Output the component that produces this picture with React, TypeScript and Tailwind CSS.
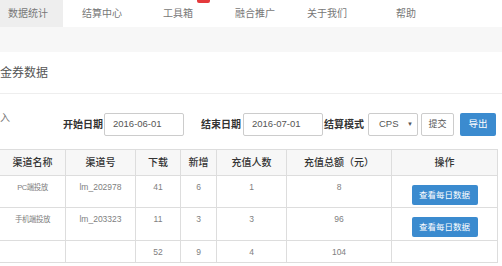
const FONT = '"Liberation Sans","Noto Sans CJK SC",sans-serif';

const navItems = [
  { label: "数据统计", cls: "w-[63px] pl-[8px] bg-[#eeeeee]" },
  { label: "结算中心", cls: "ml-[19px]" },
  { label: "工具箱", cls: "ml-[41px]", badge: true },
  { label: "融合推广", cls: "ml-[42px]" },
  { label: "关于我们", cls: "ml-[32px]" },
  { label: "帮助", cls: "ml-[49px]" },
];

const rows = [
  { name: "PC端投放", id: "lm_202978", down: 41, add: 6, payers: 1, total: 8, action: true, h: "h-[32px]" },
  { name: "手机端投放", id: "lm_203323", down: 11, add: 3, payers: 3, total: 96, action: true, h: "h-[33px]" },
  { name: "", id: "", down: 52, add: 9, payers: 4, total: 104, action: false, h: "h-[22px]" },
];

function Cell({ children }: { children?: React.ReactNode }) {
  return (
    <td className="border border-[#dddddd] pt-[5px] align-top text-center text-[8.5px] leading-[12px] text-[#808080]">
      {children}
    </td>
  );
}

export default function App() {
  return (
    <div className="w-[502px] h-[266px] overflow-hidden bg-white" style={{ fontFamily: FONT }}>
      {/* top nav */}
      <nav className="flex h-[27px] items-stretch text-[10px] text-[#777]">
        {navItems.map((item) => (
          <div key={item.label} className={`relative flex items-center ${item.cls}`}>
            {item.label}
            {item.badge && (
              <span className="absolute left-[34px] top-[-6px] h-[9px] w-[13px] rounded-[2px] bg-[#e4393c]" />
            )}
          </div>
        ))}
      </nav>

      {/* breadcrumb band */}
      <div className="h-[25px] bg-[#f7f7f7]" />

      <div className="flex h-[42px] items-center border-b border-[#eeeeee] text-[12px] text-[#555]">
        金券数据
      </div>

      {/* filters */}
      <div className="mt-[19px] flex h-[23px] items-center text-[#333]">
        <span className="self-start text-[10px] leading-[10px] text-[#777]">入</span>
        <span className="ml-[53px] text-[10px] font-bold">开始日期</span>
        <div className="ml-[1px] flex h-[23px] w-[80px] items-center rounded-[2px] border border-[#cccccc] pl-[8px] text-[9.5px] text-[#555]">
          2016-06-01
        </div>
        <span className="ml-[17px] text-[10px] font-bold">结束日期</span>
        <div className="ml-[2px] flex h-[23px] w-[80px] items-center rounded-[2px] border border-[#cccccc] pl-[8px] text-[9.5px] text-[#555]">
          2016-07-01
        </div>
        <span className="ml-[1px] text-[10px] font-bold">结算模式</span>
        <div className="ml-[4px] flex h-[23px] w-[50px] items-center justify-between rounded-[2px] border border-[#cccccc] pl-[10px] pr-[4px] text-[9.5px] text-[#555]">
          <span>CPS</span>
          <span className="text-[6px]">▼</span>
        </div>
        <button className="ml-[3px] h-[23px] w-[33px] rounded-[2px] border border-[#cccccc] bg-white text-[9px] text-[#555]">
          提交
        </button>
        <button className="ml-[6px] h-[23px] w-[36px] rounded-[2px] bg-[#3b8bcf] text-[9.5px] text-white">
          导出
        </button>
      </div>

      {/* table */}
      <table className="mt-[13px] ml-[-1px] w-[498px] table-fixed border-collapse">
        <colgroup>
          <col className="w-[66px]" />
          <col className="w-[70px]" />
          <col className="w-[45px]" />
          <col className="w-[36px]" />
          <col className="w-[70px]" />
          <col className="w-[105px]" />
          <col className="w-[106px]" />
        </colgroup>
        <thead>
          <tr className="h-[26px] bg-[#f7f7f7] text-[10px] text-[#333]">
            {["渠道名称", "渠道号", "下载", "新增", "充值人数", "充值总额（元）", "操作"].map((h) => (
              <th key={h} className="border border-[#dddddd] text-center font-medium">
                {h}
              </th>
            ))}
          </tr>
        </thead>
        <tbody>
          {rows.map((r, i) => (
            <tr key={i} className={r.h}>
              <Cell>
                <span className="tracking-[-0.5px] text-[7.5px]">{r.name}</span>
              </Cell>
              <Cell>{r.id}</Cell>
              <Cell>{r.down}</Cell>
              <Cell>{r.add}</Cell>
              <Cell>{r.payers}</Cell>
              <Cell>{r.total}</Cell>
              <td className="border border-[#dddddd] pt-[5px] align-top text-center">
                {r.action && (
                  <button className="h-[20px] w-[66px] rounded-[2px] bg-[#3b8bcf] text-[8.5px] text-white">
                    查看每日数据
                  </button>
                )}
              </td>
            </tr>
          ))}
        </tbody>
      </table>
    </div>
  );
}
